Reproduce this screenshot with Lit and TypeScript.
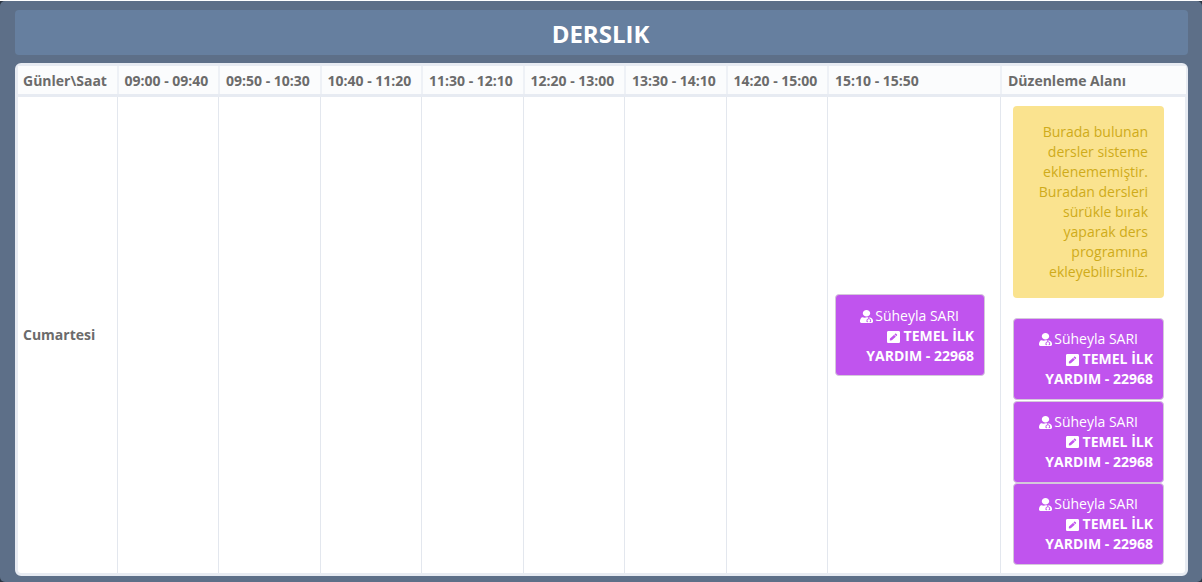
import { LitElement, html, css, svg } from "lit";
import { customElement } from "lit/decorators.js";

const times = ["09:00 - 09:40","09:50 - 10:30","10:40 - 11:20","11:30 - 12:10","12:20 - 13:00","13:30 - 14:10","14:20 - 15:00","15:10 - 15:50"];
const userMd = svg`<path d="M224 256c70.7 0 128-57.3 128-128S294.7 0 224 0 96 57.3 96 128s57.3 128 128 128zM104 424c0 13.3 10.7 24 24 24s24-10.7 24-24-10.7-24-24-24-24 10.7-24 24zm216-135.4v49c36.5 7.4 64 39.8 64 78.4v41.7c0 7.6-5.4 14.2-12.9 15.7l-32.2 6.4c-4.3.9-8.5-1.9-9.4-6.3l-3.1-15.7c-.9-4.3 1.9-8.6 6.3-9.4l19.3-3.9V416c0-62.8-96-65.1-96 1.9v26.7l19.3 3.9c4.3.9 7.1 5.1 6.3 9.4l-3.1 15.7c-.9 4.3-5.1 7.1-9.4 6.3l-31.2-4.2c-7.9-1.1-13.8-7.8-13.8-15.9V416c0-38.6 27.5-70.9 64-78.4v-45.2c-11.8-3.5-24.1-6.1-36.8-6.1h-16.7c-22.2 10.2-46.9 16-72.9 16s-50.6-5.8-72.9-16h-16.7C60.2 288 0 348.2 0 422.4V464c0 26.5 21.5 48 48 48h352c26.5 0 48-21.5 48-48v-41.6c0-61.7-41.7-113.1-96-130.2z"/>`;
const pen = svg`<path d="M400 480H48c-26.5 0-48-21.5-48-48V80c0-26.5 21.5-48 48-48h352c26.5 0 48 21.5 48 48v352c0 26.5-21.5 48-48 48zM238.1 177.9L102.4 313.6l-6.3 57.1c-.8 7.6 5.6 14.1 13.3 13.3l57.1-6.3L302.2 242c2.3-2.3 2.3-6.1 0-8.5L246.7 178c-2.5-2.4-6.3-2.4-8.6-.1zM345 165.1L314.9 135c-9.4-9.4-24.6-9.4-33.9 0l-23.1 23.1c-2.3 2.3-2.3 6.1 0 8.5l55.5 55.5c2.3 2.3 6.1 2.3 8.5 0L345 199c9.3-9.3 9.3-24.5 0-33.9z"/>`;

@customElement("app-root")
export class AppRoot extends LitElement {
  static styles = css`
    :host { display: block; height: 582px; background: #2c3644; font-family: "Open Sans", sans-serif; font-size: 14px; line-height: 20px; }
    .win { box-sizing: border-box; height: 581px; margin-top: 1px; background: #5d6f88; border-radius: 5px; padding: 9px 14px 6px 15px; display: flex; flex-direction: column; gap: 8px; }
    .title { height: 45px; flex: none; box-sizing: border-box; padding: 2px 2px 0 0; background: #667f9f; border-radius: 4px; display: flex; align-items: center; justify-content: center; color: #fff; font-size: 24px; font-weight: 700; line-height: 1; }
    .card { flex: 1; min-height: 0; box-sizing: border-box; background: #fff; border: 3px solid #e7ebf2; border-radius: 6px; display: grid; grid-template-columns: 98.5px repeat(7, 101.5px) 173px 185.5px; grid-template-rows: 28px 3px 1fr; color: #666; }
    .th { background: #fbfcfd; font-weight: 700; padding: 2px 0 0 6px; display: flex; align-items: center; border-left: 2px solid #eef1f6; box-sizing: border-box; white-space: nowrap; color: #6b6b6b; }
    .th:first-child { border-left: 0; padding-left: 5px; }
    .sep { grid-column: 1 / -1; background: #e7ebf2; }
    .td { border-left: 1px solid #e3e7ee; box-sizing: border-box; display: flex; flex-direction: column; min-width: 0; }
    .day { border-left: 0; justify-content: center; font-weight: 700; padding-left: 5px; color: #6b6b6b; }
    .slot { justify-content: center; padding: 0 15px 0 7px; }
    .edit { padding: 9px 21.5px 0 12px; }
    .note { box-sizing: border-box; height: 192px; background: #fae38f; border-radius: 4px; color: #cfab1a; text-align: right; padding: 16px 16px 0 20px; margin-bottom: 20px; }
    .lesson { box-sizing: border-box; height: 82px; flex: none; background: #c054ee; border: 1px solid #d4c8da; border-radius: 4px; color: #fff; text-align: right; padding: 11px 10px 0 10px; }
    .edit .lesson { padding-top: 10px; }
    .lesson + .lesson { margin-top: 0.5px; }
    .name { display: block; padding-right: 15px; }
    .bold { font-weight: 700; display: block; }
    svg { width: 13px; height: 13px; fill: #fff; vertical-align: -2px; }
    .name svg { margin-right: -1.5px; }
    .bold svg { height: 12px; vertical-align: -1.5px; margin-right: -0.5px; }
  `;
  lesson() {
    return html`<div class="lesson">
      <span class="name"><svg viewBox="0 0 448 512" preserveAspectRatio="none">${userMd}</svg> Süheyla SARI</span>
      <span class="bold"><svg viewBox="0 32 448 448" preserveAspectRatio="none">${pen}</svg> TEMEL İLK YARDIM - 22968</span>
    </div>`;
  }
  render() {
    return html`<div class="win">
      <div class="title">DERSLIK</div>
      <div class="card">
        <div class="th">Günler\\Saat</div>
        ${times.map((t) => html`<div class="th">${t}</div>`)}
        <div class="th">Düzenleme Alanı</div>
        <div class="sep"></div>
        <div class="td day">Cumartesi</div>
        ${times.slice(0, 7).map(() => html`<div class="td"></div>`)}
        <div class="td slot">${this.lesson()}</div>
        <div class="td edit">
          <div class="note">Burada bulunan dersler sisteme eklenememiştir. Buradan dersleri sürükle bırak yaparak ders programına ekleyebilirsiniz.</div>
          ${this.lesson()}${this.lesson()}${this.lesson()}
        </div>
      </div>
    </div>`;
  }
}
